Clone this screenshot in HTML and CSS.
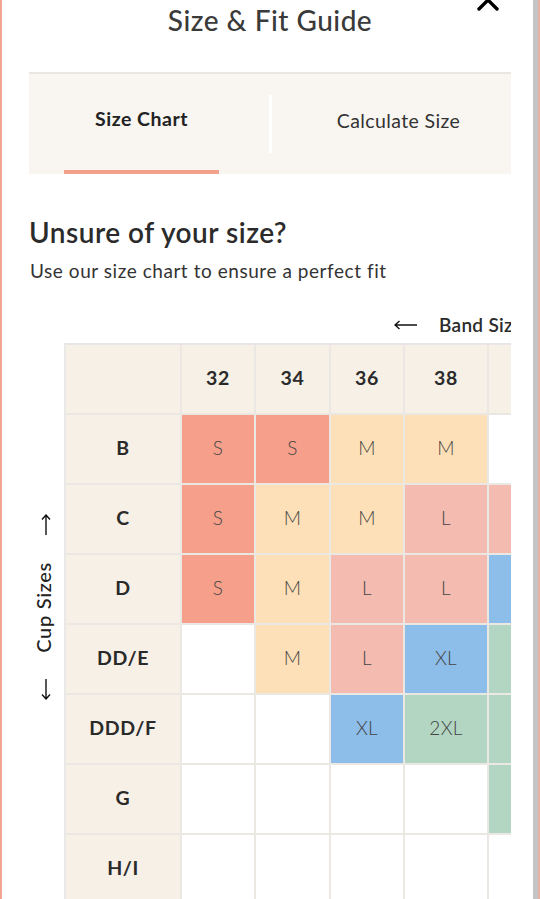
FILE: index.html
```html
<!DOCTYPE html>
<html lang="en">
<head>
<meta charset="utf-8">
<title>Size &amp; Fit Guide</title>
<link rel="stylesheet" href="styles.css">
</head>
<body>
<div class="sheet">
  <div class="main">
    <header class="header">
      <span></span>
      <h1 class="title">Size &amp; Fit Guide</h1>
      <button class="close" aria-label="Close">
        <svg width="22" height="22" viewBox="0 0 22 22"><path d="M2 2 L20 20 M20 2 L2 20" stroke="#000" stroke-width="3.4" stroke-linecap="round" fill="none"/></svg>
      </button>
    </header>

    <nav class="tabs">
      <div class="tab active">Size Chart</div>
      <div class="divider"></div>
      <div class="tab other">Calculate Size</div>
    </nav>

    <h2 class="heading">Unsure of your size?</h2>
    <p class="sub">Use our size chart to ensure a perfect fit</p>

    <div class="chart">
      <div class="band">
        <svg class="harrow" width="24" height="10" viewBox="0 0 24 10"><path d="M1 5 H23 M5.5 1 L1 5 L5.5 9" stroke="#111" stroke-width="1.4" fill="none"/></svg>
        <span class="band-label">Band Size</span>
        <svg class="harrow" width="24" height="10" viewBox="0 0 24 10"><path d="M1 5 H23 M18.5 1 L23 5 L18.5 9" stroke="#111" stroke-width="1.4" fill="none"/></svg>
      </div>
      <div class="chart-body">
        <div class="cup">
          <svg class="varrow" width="10" height="22" viewBox="0 0 10 22"><path d="M5 1 V21 M1 5.5 L5 1 L9 5.5" stroke="#111" stroke-width="1.4" fill="none"/></svg>
          <span class="cup-label">Cup Sizes</span>
          <svg class="varrow" width="10" height="22" viewBox="0 0 10 22"><path d="M5 1 V21 M1 16.5 L5 21 L9 16.5" stroke="#111" stroke-width="1.4" fill="none"/></svg>
        </div>
        <div class="grid">
          <div class="c hd"></div><div class="c hd">32</div><div class="c hd">34</div><div class="c hd">36</div><div class="c hd">38</div><div class="c hd">40</div>

          <div class="c rl">B</div><div class="c s">S</div><div class="c s">S</div><div class="c m">M</div><div class="c m">M</div><div class="c"></div>

          <div class="c rl">C</div><div class="c s">S</div><div class="c m">M</div><div class="c m">M</div><div class="c l">L</div><div class="c l">L</div>

          <div class="c rl">D</div><div class="c s">S</div><div class="c m">M</div><div class="c l">L</div><div class="c l">L</div><div class="c xl">XL</div>

          <div class="c rl">DD/E</div><div class="c"></div><div class="c m">M</div><div class="c l">L</div><div class="c xl">XL</div><div class="c xxl">2XL</div>

          <div class="c rl">DDD/F</div><div class="c"></div><div class="c"></div><div class="c xl">XL</div><div class="c xxl">2XL</div><div class="c xxl">2XL</div>

          <div class="c rl">G</div><div class="c"></div><div class="c"></div><div class="c"></div><div class="c"></div><div class="c xxl">3XL</div>

          <div class="c rl">H/I</div><div class="c"></div><div class="c"></div><div class="c"></div><div class="c"></div><div class="c"></div>
        </div>
      </div>
    </div>
  </div>
  <div class="scrollbar"></div>
  <div class="edge"></div>
</div>
</body>
</html>
```

FILE: styles.css
```css
* { box-sizing: border-box; }

html, body {
  margin: 0;
  padding: 0;
  height: 899px;
  overflow: hidden;
  background: #fff;
  font-family: "Lato", "Noto Sans", "Liberation Sans", sans-serif;
  color: #2b2b2b;
}

.sheet {
  display: flex;
  height: 899px;
  border-left: 2px solid #f2a592;
}

.main {
  width: 531px;
  padding: 0 22px 0 27px;
  overflow: hidden;
}

.scrollbar {
  width: 5px;
  background: #c6c4c4;
}

.edge {
  flex: 1;
  background: #e9b2a7;
}

/* header */
.header {
  display: grid;
  grid-template-columns: 1fr auto 1fr;
  height: 72px;
  padding-top: 2px;
}

.title {
  margin: 0;
  font-size: 28px;
  line-height: 36px;
  font-weight: 500;
  color: #3a3a3a;
  letter-spacing: 0.5px;
}

.close {
  justify-self: end;
  align-self: start;
  margin: -13px 12px 0 0;
  padding: 0;
  border: 0;
  background: none;
  width: 22px;
  height: 22px;
  display: block;
}
.close svg { display: block; }

/* tabs */
.tabs {
  display: flex;
  height: 102px;
  border-top: 2px solid #e9e7e4;
  background: #f9f6f1;
}

.tab {
  font-size: 19.5px;
  line-height: 22px;
  text-align: center;
  letter-spacing: 0.5px;
  white-space: nowrap;
}

.tab.active {
  margin-left: 35px;
  width: 155px;
  padding-top: 34px;
  font-weight: 700;
  color: #222;
  border-bottom: 4px solid #f2a28c;
}

.divider {
  align-self: center;
  margin-left: 50px;
  width: 3px;
  height: 58px;
  background: #fff;
}

.tab.other {
  flex: 1;
  padding: 36px 0 0 14px;
  font-weight: 400;
  color: #333;
  letter-spacing: 0.4px;
}

/* intro */
.heading {
  margin: 41px 0 0 0;
  font-size: 28px;
  line-height: 34px;
  font-weight: 600;
  color: #2b2b2b;
  letter-spacing: 0.5px;
}

.sub {
  margin: 10px 0 0 1px;
  font-size: 19px;
  line-height: 24px;
  font-weight: 400;
  color: #333;
  letter-spacing: 0.55px;
}

/* chart */
.chart {
  overflow: hidden;
}

.band {
  display: flex;
  align-items: center;
  gap: 21px;
  margin-top: 31px;
  padding-left: 365px;
  height: 22px;
  white-space: nowrap;
}

.band-label {
  font-size: 19px;
  line-height: 22px;
  font-weight: 600;
  color: #2b2b2b;
  letter-spacing: 0.3px;
}

.harrow { flex: none; display: block; }

.chart-body {
  display: flex;
  margin-top: 7px;
}

.cup {
  flex: none;
  width: 35px;
  display: flex;
  flex-direction: column;
  align-items: center;
  padding: 171px 2px 0 0;
}

.varrow { display: block; }

.cup-label {
  margin: 26px 6px 25px 0;
  writing-mode: vertical-rl;
  transform: rotate(180deg);
  font-size: 20px;
  font-weight: 500;
  line-height: 22px;
  color: #222;
  letter-spacing: 0.7px;
}

.grid {
  flex: none;
  display: grid;
  grid-template-columns: 114px 72px 73px 72px 82px 80px;
  grid-auto-rows: 68px;
  gap: 2px;
  background: #ebe8e4;
  border-top: 2px solid #e9e7e5;
  border-left: 2px solid #ebe9e7;
}

.c {
  display: flex;
  align-items: center;
  justify-content: center;
  padding-bottom: 4px;
  background: #fff;
  font-size: 19px;
  font-weight: 300;
  color: #444;
  letter-spacing: 0.3px;
}

.hd, .rl {
  background: #f6f0e7;
  font-size: 19.5px;
  font-weight: 700;
  color: #2a2a2a;
  letter-spacing: 0.6px;
}

.s { background: #f6a08b; }
.m { background: #fde0b7; }
.l { background: #f4bbb1; }
.xl { background: #8dbde9; }
.xxl { background: #b3d6c3; }
```
